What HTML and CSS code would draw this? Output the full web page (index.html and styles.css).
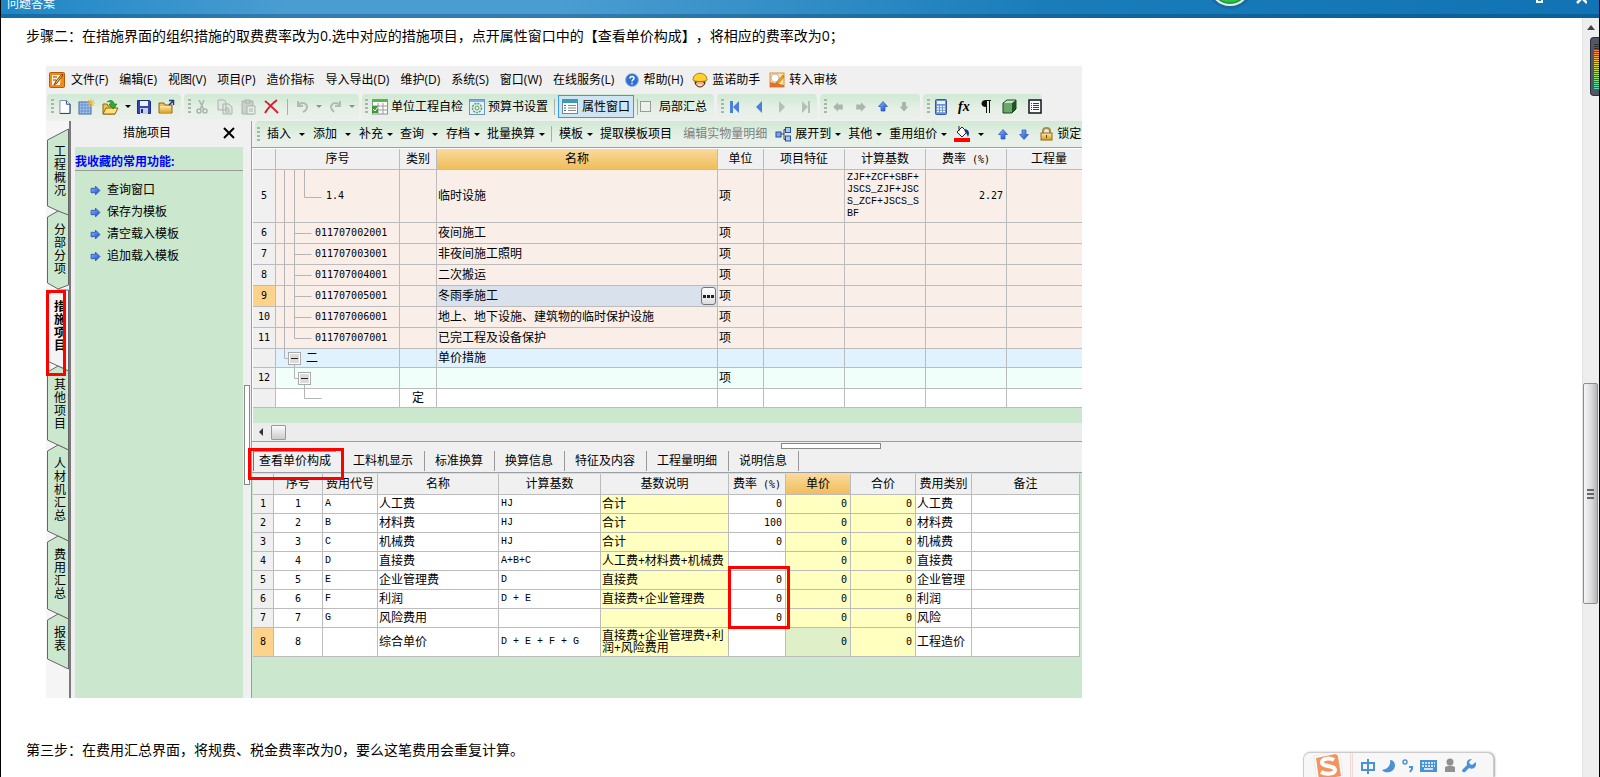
FILE: index.html
```html
<!DOCTYPE html>
<html lang="zh-CN">
<head>
<meta charset="utf-8">
<title>问题答案</title>
<link rel="stylesheet" href="styles.css">
</head>
<body>
<svg class="defs" aria-hidden="true">
  <defs>
    <linearGradient id="blue" x1="0" y1="0" x2="1" y2="1"><stop offset="0" stop-color="#8db8ff"/><stop offset="1" stop-color="#1746c8"/></linearGradient>
    <linearGradient id="gold" x1="0" y1="0" x2="0" y2="1"><stop offset="0" stop-color="#ffe9a0"/><stop offset="1" stop-color="#d99a26"/></linearGradient>
    <symbol id="arrow-right" viewBox="0 0 10 10"><path d="M1 3h4V1l4 4-4 4V7H1z" fill="url(#blue)" stroke="#2a55b8" stroke-width=".8"/></symbol>
    <symbol id="arrow-up" viewBox="0 0 10 10"><path d="M5 0l4.500 5H7v4.500H3V5H.5z" fill="url(#blue)" stroke="#2a55b8" stroke-width=".7"/></symbol>
    <symbol id="arrow-down" viewBox="0 0 10 10"><path d="M5 10L.5 5H3V.5h4V5h2.500z" fill="url(#blue)" stroke="#2a55b8" stroke-width=".7"/></symbol>
    <symbol id="box-minus" viewBox="0 0 13 13"><rect x=".5" y=".5" width="12" height="12" fill="#fff" stroke="#aaa"/><rect x="2" y="2" width="9" height="9" fill="#dcdcdc" stroke="none"/><path d="M3 6.500h7" stroke="#222"/></symbol>
  </defs>
</svg>

<header class="titlebar">
  <h1 class="title">问题答案</h1>
  <svg class="orb" width="60" height="14" viewBox="0 0 60 14"><circle cx="30" cy="-14" r="23" fill="#0e4f86" opacity=".35"/><circle cx="30" cy="-15" r="20" fill="#2fc24a" stroke="#e8ece8" stroke-width="2"/><circle cx="30" cy="-15" r="18" fill="none" stroke="#17853a"/></svg>
  <svg class="winbtns" width="52" height="4" viewBox="0 0 52 4"><path d="M2 0v2h5V0" fill="none" stroke="#fff" stroke-width="2"/><path d="M42 3l5-5 5 5" fill="none" stroke="#fff" stroke-width="2.500"/></svg>
</header>

<div class="page">
<main class="doc">
  <p class="para">步骤二：在措施界面的组织措施的取费费率改为0.选中对应的措施项目，点开属性窗口中的【查看单价构成】，将相应的费率改为0；</p>

  <section class="shot">
    <nav class="menubar">
      <svg width="16" height="16" viewBox="0 0 16 16"><rect x=".5" y=".5" width="15" height="15" rx="1" fill="#f08a1c" stroke="#b85a08"/><path d="M3 3h9l-1 10H3z" fill="#fff3d8"/><path d="M4 5h4M4 8h3M5 13l2-4 6-7 1 1-6 8z" stroke="#7a3b00" fill="#f6c04c"/></svg>
      <button>文件(F)</button><button>编辑(E)</button><button>视图(V)</button><button>项目(P)</button><button>造价指标</button><button>导入导出(D)</button><button>维护(D)</button><button>系统(S)</button><button>窗口(W)</button><button>在线服务(L)</button>
      <button><svg width="14" height="14" viewBox="0 0 14 14"><circle cx="7" cy="7" r="6.500" fill="#2f6fd0" stroke="#9dbbe8"/><path d="M5 5.500c0-3 4-2.500 4-.3C9 6.800 7 6.500 7 8.500M7 9.800v1.500" stroke="#fff" stroke-width="1.500" fill="none"/></svg>帮助(H)</button>
      <button class="near"><svg width="16" height="16" viewBox="0 0 16 16"><circle cx="8" cy="10" r="5" fill="#e9b184" stroke="#5a2d12"/><path d="M3 9h10v3l-2-2H5l-2 2z" fill="#4a2410"/><path d="M1 8c0-9 14-9 14 0 0 2-14 2-14 0z" fill="#ffd02e" stroke="#a87a08"/><path d="M6 13h4" stroke="#fff"/></svg>蓝诺助手</button>
      <button class="near"><svg width="16" height="16" viewBox="0 0 16 16"><rect x="1" y="1" width="14" height="14" fill="#fbe3a0" stroke="#e0902c"/><path d="M1 10l14 3v2H1z" fill="#e2702a"/><circle cx="6" cy="6" r="4" fill="#fff" stroke="#bbb"/><path d="M7 11l7-8 1 2-6 7z" fill="#f7a51f" stroke="#9a5c10" stroke-width=".6"/></svg>转入审核</button>
    </nav>

    <div class="toolbar">
      <div class="group g-file">
        <i class="grip"></i>
        <button aria-label="新建"><svg width="12" height="16" viewBox="0 0 13 16"><path d="M1 1h7l4 4v10H1z" fill="#fff" stroke="#6c8cb4"/><path d="M8 1v4h4M12 5v10H1" fill="none" stroke="#22406e"/></svg></button>
        <button aria-label="新建表"><svg width="17" height="16" viewBox="0 0 17 16"><rect x="1" y="3" width="12" height="12" fill="#a9c6ee" stroke="#3b66ac"/><path d="M4 3v12M7 3v12M10 3v12M1 6h12M1 9h12M1 12h12" stroke="#5d86c8" stroke-width=".8"/><path d="M13 0v8M9 4h8M10 1l6 6M16 1l-6 6" stroke="#f2bb28"/></svg></button>
        <button aria-label="打开"><svg width="17" height="16" viewBox="0 0 17 16"><path d="M1 15V5h4l1 2h7v8z" fill="#f3c13c" stroke="#8f6510"/><path d="M1 15l3-6h12l-3 6z" fill="#ffe183" stroke="#8f6510"/><path d="M5 3c4-3 7-1 7 2h3l-4 5-4-5h2c0-2-2-3-4-2z" fill="#2eb034" stroke="#107018" stroke-width=".6"/></svg></button>
        <i class="caret"></i>
        <button aria-label="保存"><svg width="14" height="14" viewBox="0 0 14 14"><path d="M.5.5h12l1 1v12H.5z" fill="#3348b0" stroke="#1c2c80"/><rect x="3" y="1" width="8" height="5" fill="#eef2ff"/><rect x="3" y="8" width="8" height="6" fill="#c9cfe4"/><rect x="4" y="9" width="2" height="4" fill="#1c2c80"/></svg></button>
        <button aria-label="关闭文件"><svg width="17" height="16" viewBox="0 0 17 16"><path d="M1 14V4h5l1 2h7v8z" fill="#efc04c" stroke="#8f6510"/><path d="M2 14V7h11v7z" fill="url(#gold)"/><path d="M11 6l4-4M11 1.500h4.500V6" fill="none" stroke="#233c78" stroke-width="1.500"/></svg></button>
      </div>
      <div class="group g-edit">
        <i class="grip"></i>
        <button aria-label="剪切"><svg width="13" height="16" viewBox="0 0 13 16" fill="none" stroke="#a9b3ab" stroke-width="1.500"><path d="M3 1l5 10M8 1L4 11"/><circle cx="3" cy="12" r="2"/><circle cx="9" cy="12" r="2"/></svg></button>
        <button aria-label="复制"><svg width="16" height="16" viewBox="0 0 16 16" fill="#dfe8e0" stroke="#a9b3ab"><path d="M1 1h6l2 2v8H1zM6 5h6l3 3v7H6z"/><path d="M8 9h4M8 11h5M8 13h5"/></svg></button>
        <button aria-label="粘贴"><svg width="15" height="16" viewBox="0 0 15 16" fill="#c8d2ca" stroke="#a9b3ab"><path d="M1 2h11v13H1z"/><path d="M4 1h5v3H4z"/><path d="M6 7h8v8H6z" fill="#e7eee8"/><path d="M8 10h4M8 12h4"/></svg></button>
        <button aria-label="删除"><svg width="15" height="15" viewBox="0 0 15 15"><path d="M1 2c4 3 9 8 13 12M13 1C9 4 4 9 1 14" stroke="#d81e34" stroke-width="2" fill="none"/></svg></button>
        <i class="sep"></i>
        <button aria-label="撤销"><svg width="13" height="13" viewBox="0 0 13 13"><path d="M2 1v5h5M2 6c3-5 9-3 9 1 0 2-2 4-4 5" fill="none" stroke="#b1bcb3" stroke-width="2"/></svg></button>
        <i class="caret dim"></i>
        <button aria-label="重做"><svg width="13" height="13" viewBox="0 0 13 13"><path d="M11 1v5H6M11 6C8 1 2 3 2 7c0 2 1 3 3 5" fill="none" stroke="#b1bcb3" stroke-width="2"/></svg></button>
        <i class="caret dim"></i>
      </div>
      <div class="group g-view">
        <i class="grip"></i>
        <button><svg width="16" height="16" viewBox="0 0 16 16"><rect x=".5" y="1" width="15" height="14" fill="#fff" stroke="#8a9097"/><rect x="0" y="0" width="16" height="3" fill="#55b848"/><path d="M0 7h16M0 11h16M6 4v11M11 4v11" stroke="#9a9a9a"/><rect x="0" y="7" width="6" height="7" fill="#3f9a36"/><path d="M1 10l2 2 3-4" stroke="#fff" fill="none"/></svg>单位工程自检</button>
        <button><svg width="16" height="16" viewBox="0 0 16 16"><rect x=".5" y=".5" width="15" height="15" fill="#e6f1fa" stroke="#6c94c0"/><rect x="1" y="1" width="14" height="2" fill="#7fb0e4"/><circle cx="8" cy="9" r="4.500" fill="none" stroke="#56a05a" stroke-width="1.500" stroke-dasharray="2 1"/><circle cx="8" cy="9" r="2" fill="none" stroke="#56a05a"/></svg>预算书设置</button>
        <i class="sep"></i>
        <button class="pressed" aria-pressed="true"><svg width="16" height="15" viewBox="0 0 16 15"><rect x=".5" y=".5" width="15" height="14" fill="#fdfdfd" stroke="#6a8a92"/><rect x="0" y="0" width="16" height="4" fill="#3a9cb0"/><path d="M2 6.500h2M2 9h2M2 11.500h2" stroke="#3b66ac"/><path d="M6 6.500h8M6 9h8M6 11.500h8" stroke="#888"/></svg>属性窗口</button>
        <i class="sep"></i>
        <label class="check"><input type="checkbox">局部汇总</label>
      </div>
      <div class="group g-nav">
        <i class="grip"></i>
        <button aria-label="首条"><svg width="10" height="12" viewBox="0 0 10 12"><path d="M0 0h3v12H0zM9 0v12L3 6z" fill="#4a7fe0"/></svg></button>
        <button aria-label="上一条"><svg width="8" height="12" viewBox="0 0 8 12"><path d="M7 0v12L1 6z" fill="#4a7fe0"/></svg></button>
        <button aria-label="下一条"><svg width="8" height="12" viewBox="0 0 8 12"><path d="M1 0v12l6-6z" fill="#b4c0b7"/></svg></button>
        <button aria-label="末条"><svg width="10" height="12" viewBox="0 0 10 12"><path d="M1 0v12l6-6zM7 0h2v12H7z" fill="#b4c0b7"/></svg></button>
      </div>
      <div class="group g-move">
        <i class="grip"></i>
        <button aria-label="左移"><svg width="12" height="12" viewBox="0 0 10 10"><path d="M9 3H5V1L1 5l4 4V7h4z" fill="#aab6ad"/></svg></button>
        <button aria-label="右移"><svg width="12" height="12" viewBox="0 0 10 10"><path d="M1 3h4V1l4 4-4 4V7H1z" fill="#aab6ad"/></svg></button>
        <button aria-label="上移"><svg width="10" height="11"><use href="#arrow-up"/></svg></button>
        <button aria-label="下移"><svg width="10" height="11" viewBox="0 0 10 10"><path d="M5 10L.5 5H3V.5h4V5h2.500z" fill="#aab6ad"/></svg></button>
      </div>
      <div class="group g-tool">
        <i class="grip"></i>
        <button aria-label="计算器"><svg width="12" height="16" viewBox="0 0 12 16"><rect x=".5" y=".5" width="11" height="15" rx="1" fill="#6a93dc" stroke="#36589c"/><rect x="2" y="2" width="8" height="3" fill="#eaf2ff"/><path d="M2 7.500h8M2 10h8M2 12.500h8" stroke="#fff" stroke-width="1.500" stroke-dasharray="2 1"/></svg></button>
        <button class="fx" aria-label="函数">fx</button>
        <button aria-label="段落"><svg width="10" height="13" viewBox="0 0 10 13"><path d="M5 0h5v1H9v12H8V1H6v12H5V7C-1 7-1 0 5 0z" fill="#111"/></svg></button>
        <button aria-label="立方"><svg width="15" height="15" viewBox="0 0 15 15"><path d="M1 4h9v10H1z" fill="#6aa868"/><path d="M1 4l4-3h9l-4 3z" fill="#c4e6c0"/><path d="M10 4l4-3v9l-4 4z" fill="#1e5426"/><path d="M1 4l4-3h9v9l-4 4H1z" fill="none" stroke="#1e4424"/></svg></button>
        <button aria-label="列表"><svg width="14" height="15" viewBox="0 0 14 15"><rect x="1" y="1" width="12" height="13" fill="#fff" stroke="#112" stroke-width="1.500"/><path d="M3 4.500h1M3 6.500h1M3 8.500h1M3 10.500h1M5 4.500h6M5 6.500h6M5 8.500h6M5 10.500h6" stroke="#2436a8"/></svg></button>
      </div>
    </div>

    <div class="workspace">
      <nav class="vtabs">
        <button class="vt h78"><svg width="23" height="78"><path d="M22.500 -10L1.500 1V67L22.500 77z"/></svg><span>工程概况</span></button>
        <button class="vt h77"><svg width="23" height="77"><path d="M12 -6L1.500 0V66L12 72 22.500 68V-2z"/></svg><span>分部分项</span></button>
        <button class="vt h78 active"><svg width="23" height="78"><path d="M12 -4L1.500 0V67L22.500 77V-4z"/></svg><span>措施项目</span></button>
        <button class="vt h79"><svg width="23" height="79"><path d="M12 -6L1.500 0V68L22.500 78V-1z"/></svg><span>其他项目</span></button>
        <button class="vt h91"><svg width="23" height="91"><path d="M12 -6L1.500 0V80L22.500 90V-1z"/></svg><span>人材机汇总</span></button>
        <button class="vt h78"><svg width="23" height="78"><path d="M12 -6L1.500 0V67L22.500 77V-1z"/></svg><span>费用汇总</span></button>
        <button class="vt h50"><svg width="23" height="50"><path d="M12 -6L1.500 0V39L22.500 49V-1z"/></svg><span>报表</span></button>
      </nav>

      <aside class="side">
        <div class="side-head"><h2>措施项目</h2><button aria-label="关闭"><svg width="12" height="12" viewBox="0 0 12 12"><path d="M1 1l10 10M11 1L1 11" stroke="#000" stroke-width="2"/></svg></button></div>
        <div class="side-body">
          <h3>我收藏的常用功能:</h3>
          <ul>
            <li><a href="#"><svg width="11" height="11"><use href="#arrow-right"/></svg>查询窗口</a></li>
            <li><a href="#"><svg width="11" height="11"><use href="#arrow-right"/></svg>保存为模板</a></li>
            <li><a href="#"><svg width="11" height="11"><use href="#arrow-right"/></svg>清空载入模板</a></li>
            <li><a href="#"><svg width="11" height="11"><use href="#arrow-right"/></svg>追加载入模板</a></li>
          </ul>
        </div>
      </aside>

      <div class="vsplit"><i></i></div>

      <div class="content">
        <div class="toolbar2">
          <i class="grip"></i>
          <button>插入</button><i class="caret far"></i>
          <button>添加</button><i class="caret far"></i>
          <button>补充</button><i class="caret"></i>
          <button>查询</button><i class="caret far"></i>
          <button>存档</button><i class="caret"></i>
          <button>批量换算</button><i class="caret"></i>
          <i class="sep"></i>
          <button>模板</button><i class="caret"></i>
          <button>提取模板项目</button>
          <button class="wide" disabled>编辑实物量明细</button>
          <button class="ico"><svg width="16" height="15" viewBox="0 0 16 15"><path d="M6 7h3M9 2.500v10M9 2.500h2M9 12.500h2" stroke="#345" fill="none"/><rect x="1" y="5" width="5" height="5" fill="#7aa5ea" stroke="#27509c"/><rect x="10.500" y=".5" width="5" height="5" fill="#a9c6f4" stroke="#27509c"/><rect x="10.500" y="9" width="5" height="5" fill="#a9c6f4" stroke="#27509c"/></svg>展开到</button><i class="caret"></i>
          <button>其他</button><i class="caret"></i>
          <button>重用组价</button><i class="caret"></i>
          <button aria-label="颜色"><svg width="16" height="16" viewBox="0 0 16 16"><path d="M3 6l5-5 5 5-5 5z" fill="#fff" stroke="#223"/><path d="M5 0v5" stroke="#223"/><path d="M10 3c5 0 6 4 4 8-1-2-1-4-3-5z" fill="#1c2f8c"/><rect y="12" width="16" height="4" fill="#f00"/></svg></button><i class="caret far"></i>
          <button class="up" aria-label="上移"><svg width="10" height="11"><use href="#arrow-up"/></svg></button>
          <button class="wide" aria-label="下移"><svg width="10" height="11"><use href="#arrow-down"/></svg></button>
          <button class="wide"><svg width="13" height="14" viewBox="0 0 13 14"><path d="M3 7V4c0-4 7-4 7 0v3" fill="none" stroke="#a98a4c" stroke-width="2"/><rect x="1" y="6" width="11" height="7" fill="url(#gold)" stroke="#946a1c"/><path d="M6.500 8v3" stroke="#5a3d08"/></svg>锁定</button>
        </div>

        <div class="grid-frame">
          <table class="grid top">
            <colgroup><col class="w23"><col class="w124"><col class="w37"><col class="w281"><col class="w46"><col class="w81"><col class="w81"><col class="w81"><col></colgroup>
            <thead><tr><th></th><th>序号</th><th>类别</th><th class="hot">名称</th><th>单位</th><th>项目特征</th><th>计算基数</th><th>费率<span class="n"> (%)</span></th><th class="cut">工程量</th></tr></thead>
            <tbody class="peach">
              <tr class="r52"><th>5</th><td class="tree"><div><svg width="50" height="52"><path d="M8.500 0v52M18.500 0v52M28.500 0v27.500h17"/></svg><span class="n">1.4</span></div></td><td></td><td>临时设施</td><td>项</td><td></td><td class="code">ZJF+ZCF+SBF+<br>JSCS_ZJF+JSC<br>S_ZCF+JSCS_S<br>BF</td><td class="num">2.27</td><td></td></tr>
              <tr class="r21"><th>6</th><td class="tree"><div><svg width="39" height="21"><path d="M8.500 0v21M18.500 0v21M18.500 10.500h17"/></svg><span class="n">011707002001</span></div></td><td></td><td>夜间施工</td><td>项</td><td></td><td></td><td></td><td></td></tr>
              <tr class="r21"><th>7</th><td class="tree"><div><svg width="39" height="21"><path d="M8.500 0v21M18.500 0v21M18.500 10.500h17"/></svg><span class="n">011707003001</span></div></td><td></td><td>非夜间施工照明</td><td>项</td><td></td><td></td><td></td><td></td></tr>
              <tr class="r21"><th>8</th><td class="tree"><div><svg width="39" height="21"><path d="M8.500 0v21M18.500 0v21M18.500 10.500h17"/></svg><span class="n">011707004001</span></div></td><td></td><td>二次搬运</td><td>项</td><td></td><td></td><td></td><td></td></tr>
              <tr class="r21"><th class="cur">9</th><td class="tree"><div><svg width="39" height="21"><path d="M8.500 0v21M18.500 0v21M18.500 10.500h17"/></svg><span class="n">011707005001</span></div></td><td></td><td class="sel"><div class="edit">冬雨季施工<button aria-label="更多"><svg width="11" height="3"><path d="M0 0h3v3H0zM4 0h3v3H4zM8 0h3v3H8z" fill="#222"/></svg></button></div></td><td>项</td><td></td><td></td><td></td><td></td></tr>
              <tr class="r21"><th>10</th><td class="tree"><div><svg width="39" height="21"><path d="M8.500 0v21M18.500 0v21M18.500 10.500h17"/></svg><span class="n">011707006001</span></div></td><td></td><td>地上、地下设施、建筑物的临时保护设施</td><td>项</td><td></td><td></td><td></td><td></td></tr>
              <tr class="r21"><th>11</th><td class="tree"><div><svg width="39" height="21"><path d="M8.500 0v21M18.500 0v10.500h17"/></svg><span class="n">011707007001</span></div></td><td></td><td>已完工程及设备保护</td><td>项</td><td></td><td></td><td></td><td></td></tr>
            </tbody>
            <tbody>
              <tr class="r19 sky"><th></th><td class="tree"><div><svg width="30" height="19"><path d="M8.500 0v9.500h4M18.500 15v4"/><use href="#box-minus" x="12" y="3" width="13" height="13"/></svg>二</div></td><td></td><td>单价措施</td><td></td><td></td><td></td><td></td><td></td></tr>
              <tr class="r21 mint"><th>12</th><td class="tree"><div><svg width="40" height="21"><path d="M18.500 0v10.500h4M28.500 16v5"/><use href="#box-minus" x="22" y="4" width="13" height="13"/></svg></div></td><td></td><td></td><td>项</td><td></td><td></td><td></td><td></td></tr>
              <tr class="r19"><th></th><td class="tree"><div><svg width="50" height="19"><path d="M28.500 0v9.500h17"/></svg></div></td><td class="mid">定</td><td></td><td></td><td></td><td></td><td></td><td></td></tr>
            </tbody>
          </table>
          <div class="filler"></div>
          <div class="hscroll"><svg width="6" height="8" viewBox="0 0 6 8"><path d="M5 0v8L1 4z" fill="#333"/></svg><i></i></div>
        </div>

        <div class="hsplit"><i></i></div>
        <div class="tabs" role="tablist">
          <button class="on" role="tab">查看单价构成</button><button role="tab">工料机显示</button><button role="tab">标准换算</button><button role="tab">换算信息</button><button role="tab">特征及内容</button><button role="tab">工程量明细</button><button role="tab">说明信息</button>
        </div>

        <div class="lower">
          <table class="grid bottom">
            <colgroup><col class="w21"><col class="w49"><col class="w55"><col class="w121"><col class="w102"><col class="w128"><col class="w57"><col class="w65"><col class="w65"><col class="w56"><col></colgroup>
            <thead><tr><th></th><th>序号</th><th>费用代号</th><th>名称</th><th>计算基数</th><th>基数说明</th><th>费率<span class="n"> (%)</span></th><th class="hot">单价</th><th>合价</th><th>费用类别</th><th>备注</th></tr></thead>
            <tbody>
              <tr><th>1</th><td class="mid n">1</td><td class="code">A</td><td>人工费</td><td class="code">HJ</td><td class="y">合计</td><td class="num">0</td><td class="num y">0</td><td class="num y">0</td><td>人工费</td><td></td></tr>
              <tr><th>2</th><td class="mid n">2</td><td class="code">B</td><td>材料费</td><td class="code">HJ</td><td class="y">合计</td><td class="num">100</td><td class="num y">0</td><td class="num y">0</td><td>材料费</td><td></td></tr>
              <tr><th>3</th><td class="mid n">3</td><td class="code">C</td><td>机械费</td><td class="code">HJ</td><td class="y">合计</td><td class="num">0</td><td class="num y">0</td><td class="num y">0</td><td>机械费</td><td></td></tr>
              <tr><th>4</th><td class="mid n">4</td><td class="code">D</td><td>直接费</td><td class="code">A+B+C</td><td class="y">人工费+材料费+机械费</td><td class="num"></td><td class="num y">0</td><td class="num y">0</td><td>直接费</td><td></td></tr>
              <tr><th>5</th><td class="mid n">5</td><td class="code">E</td><td>企业管理费</td><td class="code">D</td><td class="y">直接费</td><td class="num">0</td><td class="num y">0</td><td class="num y">0</td><td>企业管理</td><td></td></tr>
              <tr><th>6</th><td class="mid n">6</td><td class="code">F</td><td>利润</td><td class="code">D + E</td><td class="y">直接费+企业管理费</td><td class="num">0</td><td class="num y">0</td><td class="num y">0</td><td>利润</td><td></td></tr>
              <tr><th>7</th><td class="mid n">7</td><td class="code">G</td><td>风险费用</td><td class="code"></td><td class="y"></td><td class="num">0</td><td class="num y">0</td><td class="num y">0</td><td>风险</td><td></td></tr>
              <tr class="r29"><th class="cur">8</th><td class="mid n">8</td><td class="code"></td><td>综合单价</td><td class="code">D + E + F + G</td><td class="y">直接费+企业管理费+利<br>润+风险费用</td><td class="num"></td><td class="num g">0</td><td class="num y">0</td><td>工程造价</td><td></td></tr>
            </tbody>
          </table>
        </div>
      </div>
    </div>

    <i class="mark m1"></i><i class="mark m2"></i><i class="mark m3"></i>
  </section>

  <p class="para last">第三步：在费用汇总界面，将规费、税金费率改为0，要么这笔费用会重复计算。</p>
</main>

<div class="vscroll">
  <svg class="up" width="8" height="5" viewBox="0 0 8 5"><path d="M4 0l4 5H0z" fill="#444"/></svg>
  <div class="thumb"><i></i><i></i><i></i></div>
</div>
</div>

<div class="meter"><i></i></div>

<div class="ime">
  <svg class="slogo" width="30" height="26" viewBox="0 0 30 26"><path d="M1 4L23 0q3 0 4 3l3 20-26 6z" fill="#fff" stroke="#ddd" stroke-width=".6"/><path d="M3 6L22 2q2 0 3 2l3 20-22 4z" fill="#f4935f"/><path d="M21 8c-5-3-13-1-12 3 1 4 13 2 13 7 0 4-9 5-14 2" fill="none" stroke="#fff" stroke-width="4"/></svg>
  <i class="rule"></i>
  <svg width="116" height="18" viewBox="0 0 116 18">
    <g fill="none" stroke="#4a92d6" stroke-width="2"><path d="M2 5h12v7H2zM8 1v15"/></g>
    <path d="M30 2c1 5-2 9-8 10 3 4 12 3 13-4 0-4-2-6-5-6z" fill="#4a92d6"/>
    <circle cx="45" cy="4" r="2" fill="none" stroke="#4a92d6" stroke-width="1.500"/><path d="M49 9h3v2l-2 3" fill="none" stroke="#4a92d6" stroke-width="2"/>
    <rect x="60" y="2" width="17" height="12" fill="#4a92d6"/><path d="M62 5h13M62 8h13" stroke="#fff" stroke-width="1.500" stroke-dasharray="2 1"/><path d="M64 11h9" stroke="#fff" stroke-width="1.500"/>
    <circle cx="90" cy="4" r="3.500" fill="#919191"/><path d="M85 9q5-3 10 0v5H85z" fill="#919191"/>
    <path d="M112 1l-3 3 1 2 2 1 4-3c1 5-3 8-7 6l-4 4q-3 1-3-2l5-5c-1-4 1-6 5-6z" fill="#4a92d6"/>
  </svg>
</div>
</body>
</html>
```
FILE: styles.css
```css
* { box-sizing: border-box; }
body {
  margin: 0;
  min-height: 100vh;
  display: flex;
  flex-direction: column;
  position: relative;
  overflow: hidden;
  background: #fff;
  border-left: 1px solid #000;
  border-right: 1px solid #000;
  font-family: "Open Sans", "Noto Sans CJK SC", sans-serif;
  font-size: 12px;
  line-height: 16px;
  color: #000;
  text-spacing-trim: space-all;
}
.defs { position: absolute; width: 0; height: 0; }
button { font: inherit; color: inherit; background: none; border: 0; padding: 0; margin: 0; white-space: nowrap; }
svg { flex: none; }
h1, h2, h3, p, ul { margin: 0; padding: 0; font-weight: normal; }
i { flex: none; }

.titlebar {
  flex: none;
  height: 18px;
  position: relative;
  overflow: hidden;
  background: linear-gradient(90deg, #1e86c5 0, #4a9dd1 18%, #4a9dd1 35%, #1a7dba 65%, #1173b3 100%);
  border-bottom: 4px solid rgba(0, 50, 90, .3);
  background-origin: border-box;
}
.title { color: #fff; font-size: 12px; line-height: 8px; padding-left: 6px; }
.orb { position: absolute; left: 75%; top: 0; }
.winbtns { position: absolute; right: 12px; top: 0; }

.page { flex: 1; display: flex; }
.doc { flex: 1; min-width: 0; padding: 8px 24px 0 25px; }
.para { font-size: 14px; line-height: 20px; }
.last { margin-top: 42px; }

.shot {
  position: relative;
  margin: 20px 0 0 20px;
  max-width: 1036px;
  background: #f0f0f0;
  overflow: hidden;
}
.menubar { display: flex; align-items: center; height: 28px; padding: 0 3px; gap: 11px; }
.menubar > svg { margin-right: -5px; }
.menubar button { display: flex; align-items: center; gap: 4px; }
.menubar .near { margin-left: -2px; }

.toolbar { display: flex; gap: 3px; height: 25px; padding-left: 1px; }
.group, .toolbar2 { display: flex; align-items: center; background: linear-gradient(#cfe9d3, #e6f0e7 60%, #eaf0ea); border-radius: 4px; }
.group { flex: none; gap: 8px; padding-left: 4px; }
.group button, .toolbar2 button, .check { display: flex; align-items: center; gap: 4px; white-space: nowrap; }
.g-file { width: 134px; gap: 7px; }
.g-file .grip { margin-right: -2px; }
.g-edit { width: 175px; gap: 8px; }
.g-edit .grip { margin-right: -3px; }
.g-view { width: 352px; gap: 6px; padding-left: 3px; }
.g-view .grip { margin-right: -2px; }
.g-view button { gap: 3px; }
.g-nav { width: 100px; gap: 15px; }
.g-nav .grip { margin-right: -9px; }
.g-move { width: 100px; gap: 11px; }
.g-move .grip { margin-right: -6px; }
.g-tool { width: 119px; gap: 11px; }
.g-tool .grip { margin-right: -6px; }
.grip { width: 3px; height: 15px; background: repeating-linear-gradient(#a9b5ab 0 2px, transparent 2px 4px); }
.caret { border: 3px solid transparent; border-top-color: #000; border-bottom: 0; margin: 0 -1px; }
.caret.dim { border-top-color: #8b958d; }
.sep { width: 1px; height: 16px; background: #a7b0a8; }
.g-view .pressed { height: 23px; padding: 0 3px; margin: 0 -3px; background: #d0e5f2; border: 1px solid #3399ff; gap: 4px; }
.check { gap: 8px; }
.check input { width: 11px; height: 11px; margin: 0 0 0 -4px; appearance: none; border: 1px solid #999; background: #eaf2ea; }
.fx { font: italic bold 14px/16px "Liberation Serif", serif; }

.workspace { display: flex; margin-top: 2px; height: 577px; }
.vtabs { width: 25px; flex: none; border-right: 2px solid #77797a; padding-top: 18px; background: #f5f5f5; }
.vt { display: flex; align-items: flex-start; position: relative; width: 23px; }
.vt svg { position: absolute; left: 0; top: 0; overflow: visible; fill: #cbe8ce; stroke: #666; }
.vt.active svg { fill: #f4f4f4; }
.vt.active { font-weight: bold; }
.vt span { position: relative; display: block; width: 12px; margin: 6px 0 0 8px; line-height: 13px; white-space: normal; word-break: break-all; }
.h78 { height: 78px; } .h77 { height: 77px; } .h79 { height: 79px; } .h91 { height: 91px; } .h50 { height: 50px; }

.side { flex: none; width: 168px; margin-left: 4px; display: flex; flex-direction: column; }
.side-head { height: 26px; display: flex; align-items: center; padding: 0 8px 2px 0; }
.side-head h2 { flex: 1; font-size: 12px; padding-left: 48px; }
.side-head button { line-height: 0; }
.side-body { flex: 1; background: #cbe8ce; padding-top: 7px; }
.side h3 { font-size: 12px; line-height: 16px; font-weight: bold; color: #00f; border-bottom: 1px solid #999; }
.side ul { list-style: none; padding: 8px 0 0 15px; }
.side li { height: 22px; }
.side a { display: flex; align-items: center; gap: 6px; height: 22px; color: #000; text-decoration: none; }

.vsplit { flex: none; width: 8px; padding: 264px 1px 0; background: #f0f0f0; }
.vsplit i { display: block; height: 100px; width: 6px; border: 1px solid #888; background: #fff; }

.content { flex: 1; min-width: 0; display: flex; flex-direction: column; border-left: 1px solid #999fa3; }
.toolbar2 { flex: none; height: 26px; margin-left: 3px; padding-left: 2px; border-radius: 4px 0 0 4px; overflow: hidden; }
.toolbar2 button { margin-left: 7px; }
.toolbar2 .caret { margin: 0 0 0 4px; }
.toolbar2 .caret.far { margin-left: 8px; }
.toolbar2 .sep { margin-left: 6px; }
.toolbar2 .caret + button { margin-left: 7px; }
.toolbar2 .caret.far + button { margin-left: 8px; }
.toolbar2 .caret.far + button.up { margin-left: 14px; }
.toolbar2 button.ico { margin-left: 8px; }
.toolbar2 button.wide { margin-left: 11px; }
.toolbar2 button:disabled { color: #808080; }

.grid-frame { border-top: 1px solid #999fa3; border-bottom: 1px solid #999fa3; padding-top: 1px; padding-left: 1px; background: #fff; }
.grid { width: 100%; table-layout: fixed; border-collapse: separate; border-spacing: 0; line-height: 12px; }
.grid th, .grid td { border-right: 1px solid #bcbcbc; border-bottom: 1px solid #bcbcbc; padding: 0 1px; overflow: hidden; white-space: nowrap; text-align: left; font-weight: normal; }
.grid td { background: #fff; }
.grid th { background: #f0f0f0; text-align: center; }
.grid thead th { height: 21px; }
.grid thead th.hot { background: linear-gradient(#fbd99c, #efbe5c); }
.grid thead th.cut { padding-left: 10px; }
.grid tbody th, .n, .grid .num { font-family: "DejaVu Sans Mono", monospace; font-size: 10px; }
.grid .num { text-align: right; padding-right: 3px; }
.grid .mid { text-align: center; }
.grid .code { font-family: "Liberation Mono", monospace; font-size: 10px; padding-left: 2px; }
.grid tbody th.cur { background: #fdd28a; }
.top td:last-child, .top th:last-child { border-right: 0; }
.peach td { background: #f9efe8; }
.grid td.sel { background: #d9e1ec; }
.sky td { background: #e0f2fe; }
.mint td { background: #f0fffa; }
.r52 > * { height: 53px; } .r21 > * { height: 21px; } .r19 > * { height: 19px; }
.tree div { display: flex; align-items: center; height: 18px; margin: 0 -1px; }
.r52 .tree div { height: 52px; }
.tree svg { stroke: #b4b4b4; fill: none; }
.edit { display: flex; justify-content: space-between; align-items: center; }
.edit button { display: flex; align-items: center; justify-content: center; width: 15px; height: 18px; border: 1px solid #70747a; border-radius: 3px; background: linear-gradient(#fff, #ddd); }
.filler { height: 15px; background: #cbe8ce; }
.hscroll { display: flex; align-items: center; gap: 7px; height: 18px; padding-left: 5px; background: #ececec; }
.hscroll i { width: 15px; height: 15px; border: 1px solid #999; border-radius: 1px; background: linear-gradient(#fafafa, #ccc); }

.hsplit { height: 7px; padding: 1px 0 0 529px; }
.hsplit i { display: block; width: 100px; height: 6px; border: 1px solid #888; background: #fff; }
.tabs { display: flex; align-items: center; height: 24px; padding-left: 1px; border-bottom: 1px solid #999fa3; }
.tabs button { height: 20px; padding: 0 11px 0 10px; border-right: 1px solid #999; }
.tabs button.on { padding: 0 5px; margin-right: 7px; border: 0; border-left: 1px solid #777; border-top: 1px solid #999; }

.lower { flex: 1; padding: 1px 2px 0 1px; background: #cbe8ce; }
.bottom tbody tr > * { height: 19px; }
.bottom tbody tr.r29 > * { height: 29px; }
.grid td.y { background: #ffffc0; }
.grid td.g { background: #dff0c8; }
.w23 { width: 23px; } .w124 { width: 124px; } .w37 { width: 37px; } .w281 { width: 281px; } .w46 { width: 46px; } .w81 { width: 81px; }
.w21 { width: 21px; } .w49 { width: 49px; } .w55 { width: 55px; } .w121 { width: 121px; } .w102 { width: 102px; } .w128 { width: 128px; } .w57 { width: 57px; } .w65 { width: 65px; } .w56 { width: 56px; }

.mark { position: absolute; border: 3px solid #f00; }
.m1 { left: 0; top: 224px; width: 20px; height: 86px; }
.m2 { left: 202px; top: 382px; width: 96px; height: 32px; }
.m3 { left: 682px; top: 500px; width: 62px; height: 63px; }

.vscroll { flex: none; width: 17px; background: #eee; border-left: 1px solid #e2e2e2; padding: 7px 1px 0 0; display: flex; flex-direction: column; }
.vscroll .up { align-self: center; }
.thumb { margin-top: 353px; height: 221px; border: 1px solid #8e8e92; border-radius: 2px; background: linear-gradient(90deg, #f6f6f6, #d8d8da 60%, #b4b5b9); display: flex; flex-direction: column; justify-content: center; align-items: center; gap: 2px; }
.thumb i { width: 7px; height: 2px; background: #666; }
.meter { position: absolute; right: -1px; top: 37px; width: 10px; height: 59px; background: #515767; border: 1px solid #2d313c; border-right: 0; border-radius: 4px 0 0 4px; padding: 6px 1px 0 3px; }
.meter i { display: block; height: 46px; background: repeating-linear-gradient(transparent 0 1px, #515767 1px 2px), linear-gradient(#333 0 6px, #f07a50 6px, #f0d040 18px, #a8e060 30px, #40e0c0); }
.ime { position: absolute; right: 105px; bottom: 0; width: 191px; height: 25px; display: flex; align-items: center; padding-left: 9px; background: #f7f7f7; border: 1px solid #ccc; border-bottom: 0; border-radius: 7px 7px 0 0; box-shadow: 1px 0 2px #aaa; overflow: hidden; }
.ime .rule { width: 3px; height: 25px; margin: 0 7px; border: 1px solid #f6d6d6; border-width: 0 1px; }
.ime svg + i + svg { margin-top: 4px; }
```
